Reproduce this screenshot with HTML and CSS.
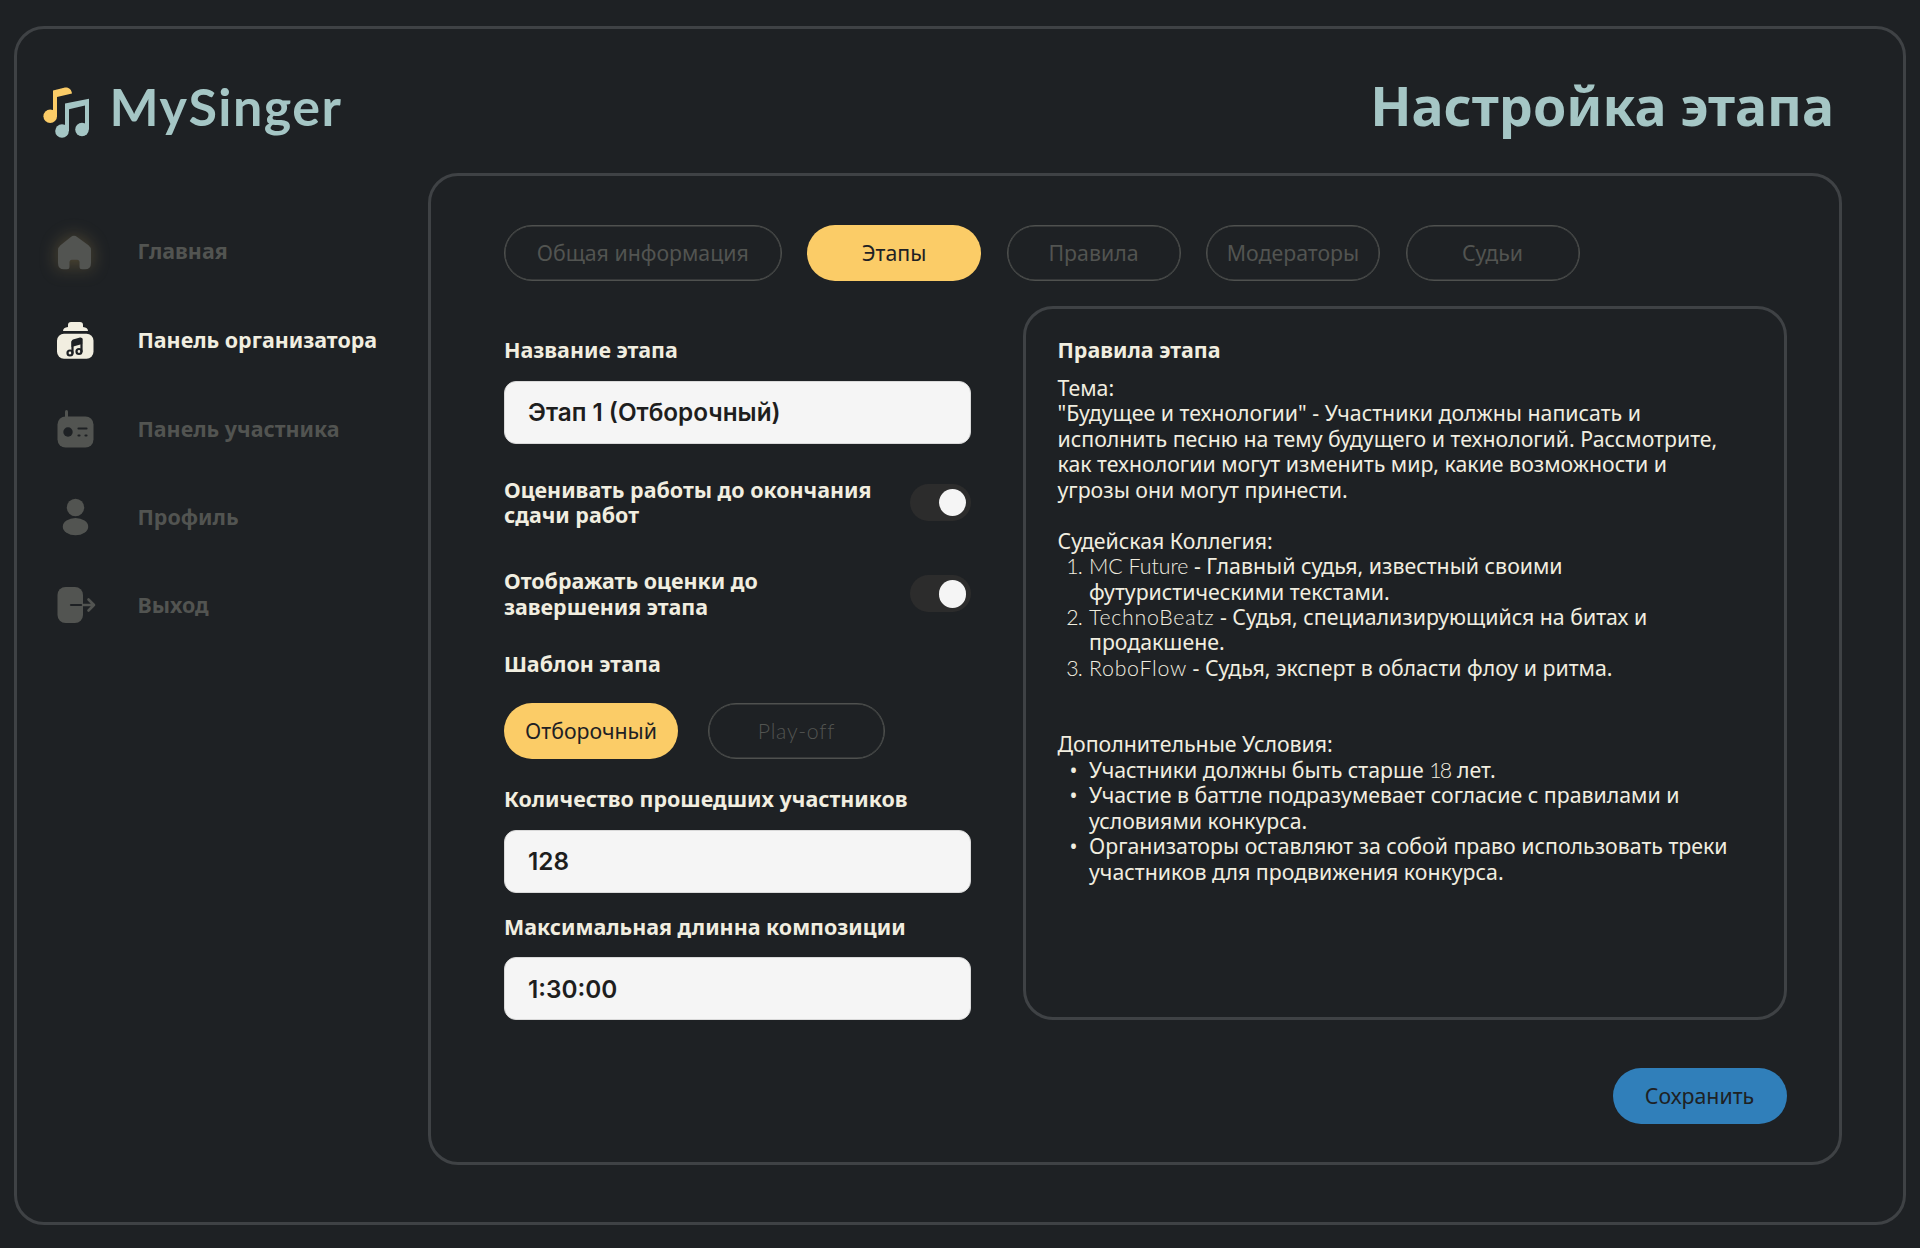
FILE: index.html
```html
<!DOCTYPE html>
<html lang="ru">
<head>
<meta charset="utf-8">
<title>MySinger — Настройка этапа</title>
<link rel="stylesheet" href="styles.css">
</head>
<body>
<div class="frame">
  <header class="header">
    <div class="brand">
      <svg class="brand-icon" width="48" height="52" viewBox="0 0 48 52">
        <g fill="#fbcc67">
          <circle cx="7.2" cy="29.2" r="6.8"/>
          <path d="M10 3.500L22 .6C26 .2 28.700 3 29 6.500L14 10V29.500H10z"/>
        </g>
        <g fill="#a5c6c5">
          <circle cx="19" cy="44" r="6.800"/>
          <circle cx="39" cy="42.500" r="6.800"/>
          <path d="M22 16.500L46 11.700V42.500H42V18.600L26 22.200V44H22z"/>
        </g>
      </svg>
      <span class="brand-name">MySinger</span>
    </div>
    <h1 class="title">Настройка этапа</h1>
  </header>
  <div class="body">
    <nav class="nav">
      <a class="nav-item">
        <svg class="nav-icon glow" viewBox="0 0 38 38"><path d="M14.500 2.200q3.500-2.800 7 0l11 8q2.500 2 2.500 5v13q0 6-6 6h-3q-2.500 0-2.500-2.500v-4.500q0-2.500-2.500-2.500h-5q-2.500 0-2.500 2.500v4.500q0 2.500-2.500 2.500h-3q-6 0-6-6v-13q0-3 2.500-5z"/></svg>
        <span class="home-label">Главная</span>
      </a>
      <a class="nav-item active">
        <svg class="nav-icon" viewBox="0 0 38 38"><path d="M7 10q0-3.500 5-4V4q0-3 3-3h9q3 0 3 3v2q5 .5 5 4z"/><rect x="1" y="12.700" width="36.500" height="25" rx="7"/><path class="notch" d="M15.500 20.500q.2-1.500 1.500-2l7-2q2.200-.4 2.200 1.500v5l-10.700 3z"/><g class="cut"><path d="M16.500 32V21M25.500 30.500V18"/><circle cx="14" cy="32" r="2.500"/><circle cx="23" cy="30.500" r="2.500"/></g></svg>
        <span>Панель организатора</span>
      </a>
      <a class="nav-item">
        <svg class="nav-icon" viewBox="0 0 38 38"><rect x="9" y="0" width="3" height="10" rx="1.500"/><rect x="1.500" y="6.500" width="36" height="31" rx="8"/><circle class="hole" cx="12" cy="22" r="4.700"/><g class="cut"><path d="M22.500 18.500h8M22.500 25.500h1M29.500 25.500h1"/></g></svg>
        <span>Панель участника</span>
      </a>
      <a class="nav-item">
        <svg class="nav-icon" viewBox="0 0 38 38"><circle cx="19.500" cy="9.500" r="8.700"/><ellipse cx="19.500" cy="28.700" rx="12.700" ry="8.600"/></svg>
        <span>Профиль</span>
      </a>
      <a class="nav-item">
        <svg class="nav-icon" viewBox="0 0 38 38"><rect x="1.500" y="1" width="25.500" height="36" rx="8"/><path class="cut" d="M15 19h12"/><path class="arrow" d="M27 19h11M32.500 13.500L38 19l-5.500 5.500"/></svg>
        <span>Выход</span>
      </a>
    </nav>
    <main class="panel">
      <div class="tabs">
        <button class="pill wide">Общая информация</button>
        <button class="pill selected">Этапы</button>
        <button class="pill">Правила</button>
        <button class="pill">Модераторы</button>
        <button class="pill">Судьи</button>
      </div>
      <div class="columns">
        <form class="form">
          <label class="label" for="name">Название этапа</label>
          <input class="field" id="name" value="Этап 1 (Отборочный)">
          <div class="switch-row first">
            <span class="label">Оценивать работы до окончания<br>сдачи работ</span>
            <span class="switch"></span>
          </div>
          <div class="switch-row">
            <span class="label">Отображать оценки до<br>завершения этапа</span>
            <span class="switch"></span>
          </div>
          <span class="label template-label">Шаблон этапа</span>
          <div class="templates">
            <button class="pill selected" type="button">Отборочный</button>
            <button class="pill outline latin" type="button">Play-off</button>
          </div>
          <label class="label count-label" for="count">Количество прошедших участников</label>
          <input class="field" id="count" value="128">
          <label class="label length-label" for="length">Максимальная длинна композиции</label>
          <input class="field" id="length" value="1:30:00">
        </form>
        <section class="rules">
          <h2 class="label">Правила этапа</h2>
          <p>Тема:<br>"Будущее и технологии" - Участники должны написать и<br>исполнить песню на тему будущего и технологий. Рассмотрите,<br>как технологии могут изменить мир, какие возможности и<br>угрозы они могут принести.</p>
          <p class="gap">Судейская Коллегия:</p>
          <ol>
            <li><span class="num latin">1.</span><span><span class="latin">MC Future</span> - Главный судья, известный своими<br>футуристическими текстами.</span></li>
            <li><span class="num latin">2.</span><span><span class="latin spaced">TechnoBeatz</span> - Судья, специализирующийся на битах и<br>продакшене.</span></li>
            <li><span class="num latin">3.</span><span><span class="latin spaced">RoboFlow</span> - Судья, эксперт в области флоу и ритма.</span></li>
          </ol>
          <p class="gap-2">Дополнительные Условия:</p>
          <ul>
            <li><span class="num">•</span><span>Участники должны быть старше <span class="latin tight">18</span> лет.</span></li>
            <li><span class="num">•</span><span>Участие в баттле подразумевает согласие с правилами и<br>условиями конкурса.</span></li>
            <li><span class="num">•</span><span>Организаторы оставляют за собой право использовать треки<br>участников для продвижения конкурса.</span></li>
          </ul>
        </section>
      </div>
      <button class="pill save">Сохранить</button>
    </main>
  </div>
</div>
</body>
</html>
```
FILE: styles.css
```css
* { box-sizing: border-box; margin: 0; padding: 0; }
body {
  background: #1e2124;
  color: #f1eee0;
  font: 400 21.3px/25.45px "Noto Sans", sans-serif;
  padding: 26px 14px 22px 14px;
  height: 1248px;
  overflow: hidden;
}
.frame { height: 1199px; border: 3px solid #3f4245; border-radius: 30px; }
.header {
  display: flex;
  justify-content: space-between;
  height: 144px;
  padding: 41px 69px 0 26px;
  color: #a5c6c5;
}
.brand { display: flex; align-items: flex-start; gap: 18.5px; }
.brand-icon { margin-top: 17px; }
.brand-name {
  font: 700 52px/72px "Lato", sans-serif;
  letter-spacing: 1.5px;
}
.title { font-size: 53.7px; line-height: 72px; font-weight: 700; white-space: nowrap; }
.body { display: flex; }
.nav {
  display: flex;
  flex-direction: column;
  gap: 50.3px;
  width: 411px;
  padding: 60.5px 0 0 39px;
}
.nav-item {
  display: flex;
  align-items: center;
  gap: 43.5px;
  height: 38px;
  font-size: 21.45px;
  font-weight: 700;
  color: #525451;
  white-space: nowrap;
}
.nav-item.active { color: #f1eee0; }
.nav-item span { margin-top: -1.5px; }
.nav-item .home-label { margin-top: -4.5px; }
.nav-icon { width: 38px; height: 38px; margin-top: -1px; fill: currentColor; overflow: visible; }
.nav-icon.glow { margin-top: 3px; filter: drop-shadow(0 0 9px rgba(252, 207, 103, .25)); }
.cut { fill: none; stroke: #1e2124; stroke-width: 2.2; stroke-linecap: round; stroke-linejoin: round; }
.hole, .notch { fill: #1e2124; }
.arrow { fill: none; stroke: currentColor; stroke-width: 2.6; stroke-linecap: round; stroke-linejoin: round; }
.panel {
  width: 1414px;
  height: 992px;
  border: 3px solid #3f4245;
  border-radius: 30px;
  padding: 49px 52.5px 0 73px;
}
.tabs { display: flex; gap: 25.5px; }
.pill {
  width: 174px;
  height: 56px;
  border: 1px solid #4f514f;
  border-radius: 28px;
  box-shadow: inset 0 0 0 .5px #4f514f;
  background: none;
  color: #525451;
  font: 400 21.3px/25.45px "Noto Sans", sans-serif;
  white-space: nowrap;
}
.wide { width: 277.5px; }
.outline { width: 177px; padding-top: 3px; letter-spacing: .7px; }
.selected { background: #fbcc67; border: 0; box-shadow: none; color: #1e2124; }
.columns { display: flex; justify-content: space-between; margin-top: 25px; }
.form { width: 467px; padding-top: 31px; display: flex; flex-direction: column; }
.label { font-size: 21.45px; line-height: 25.45px; font-weight: 700; white-space: nowrap; }
.field {
  width: 467px;
  height: 63px;
  margin-top: 18px;
  padding: 0 23px;
  border: 1px solid #d9d9d9;
  border-radius: 12px;
  background: #f5f5f5;
  color: #1e1e1e;
  font: 600 24.3px/30px "Inter", sans-serif;
}
.label:first-child + .field { margin-top: 18.5px; }
.switch-row { display: flex; justify-content: space-between; align-items: center; margin-top: 40.5px; }
.switch-row.first { margin-top: 33px; }
.switch {
  display: flex;
  justify-content: flex-end;
  align-items: center;
  width: 61px;
  height: 37px;
  padding-right: 5px;
  border-radius: 19px;
  background: #2c2c2c;
}
.switch::after { content: ""; width: 27.5px; height: 27.5px; border-radius: 50%; background: #f5f5f5; }
.template-label { margin-top: 31.5px; }
.templates { display: flex; gap: 30px; margin-top: 26.5px; }
.count-label { margin-top: 27.5px; }
.length-label { margin-top: 21px; }
.rules {
  width: 763.5px;
  height: 714px;
  border: 3px solid #3f4245;
  border-radius: 30px;
  padding: 28px 0 0 31.5px;
  white-space: nowrap;
}
.rules p:first-of-type { margin-top: 12.5px; }
.rules .gap { margin-top: 25.45px; }
.rules .gap-2 { margin-top: 50.9px; }
.rules li { display: flex; }
.latin { font-family: "Lato", "Noto Sans", sans-serif; font-weight: 300; }
.rules .latin { line-height: 0; }
.num { width: 31.5px; padding-right: 7px; text-align: right; flex: none; }
.rules .num.latin { padding-top: 1px; letter-spacing: -.8px; line-height: 25.45px; height: 25.45px; }
ul .num { padding-right: 11.5px; }
.spaced { letter-spacing: .75px; }
.tight { letter-spacing: -1.8px; margin-right: 1px; }
.save { display: block; margin: 48px 0 0 auto; background: #307fba; border: 0; box-shadow: none; color: #1e2124; }
```
